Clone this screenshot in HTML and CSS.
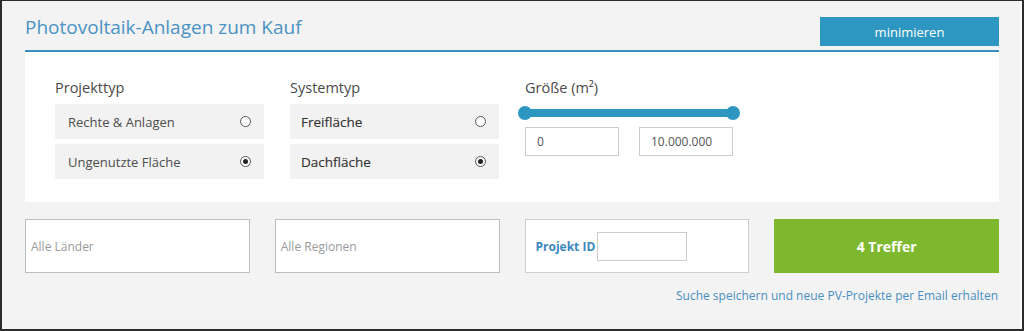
FILE: index.html
```html
<!DOCTYPE html>
<html lang="de">
<head>
  <meta charset="UTF-8" />
  <title>Photovoltaik-Anlagen zum Kauf</title>
  <link rel="stylesheet" href="styles.css">
</head>
<body>

<div class="frame">

  <!-- Header -->
  <div class="header">
    <h1>Photovoltaik-Anlagen zum Kauf</h1>
    <button class="min-btn">minimieren</button>
  </div>

  <!-- Filter panel -->
  <div class="panel">
    <div class="col">
      <div class="label">Projekttyp</div>
      <div class="option">Rechte &amp; Anlagen <span class="radio"></span></div>
      <div class="option">Ungenutzte Fläche <span class="radio checked"></span></div>
    </div>
    <div class="col">
      <div class="label">Systemtyp</div>
      <div class="option strong">Freifläche <span class="radio"></span></div>
      <div class="option strong">Dachfläche <span class="radio checked"></span></div>
    </div>
    <div class="col size">
      <div class="label">Größe (m²)</div>
      <div class="slider">
        <span class="track"></span>
        <span class="knob"></span>
        <span class="knob"></span>
      </div>
      <div class="range-inputs">
        <div class="num">0</div>
        <div class="num">10.000.000</div>
      </div>
    </div>
  </div>

  <!-- Bottom row -->
  <div class="bottom">
    <div class="select">Alle Länder</div>
    <div class="select">Alle Regionen</div>
    <div class="id-box">
      <span class="id-label">Projekt ID</span>
      <span class="id-input"></span>
    </div>
    <button class="hits">4 Treffer</button>
  </div>

  <div class="save-link"><a href="#">Suche speichern und neue PV-Projekte per Email erhalten</a></div>

</div>

</body>
</html>
```

FILE: styles.css
```css
* {
  margin: 0;
  padding: 0;
  box-sizing: border-box;
}

body {
  font-family: 'Open Sans', 'Liberation Sans', sans-serif;
  background: #f3f3f3;
  color: #444;
}

.frame {
  height: 331px;
  border: 2px solid #2b2b2b;
  border-top-width: 1px;
  background: #f3f3f3;
  padding: 0 23px;
  box-shadow: inset -2px 0 0 #fbfbfb;
}

/* Header */
.header {
  display: flex;
  justify-content: space-between;
  align-items: flex-start;
  padding-top: 12px;
  padding-bottom: 4px;
  border-bottom: 2px solid #3a8fbf;
}

.header h1 {
  font-size: 19px;
  font-weight: normal;
  line-height: 28px;
  color: #4a92c4;
}

.min-btn {
  margin-top: 4px;
  width: 179px;
  height: 29px;
  border: none;
  background: #2e97c1;
  color: #fff;
  font-family: inherit;
  font-size: 13px;
}

/* Panel */
.panel {
  background: #fff;
  height: 150px;
  padding: 26px 30px 0 30px;
  display: flex;
  gap: 26px;
}

.col {
  width: 209px;
  display: flex;
  flex-direction: column;
  gap: 5px;
}

.label {
  font-size: 14.5px;
  line-height: 20px;
  color: #4a4a4a;
  margin-bottom: 1px;
}

.option {
  height: 35px;
  background: #f2f2f2;
  display: flex;
  align-items: center;
  justify-content: space-between;
  padding: 0 13px 0 13px;
  font-size: 13px;
  color: #4d4d4d;
}

.option.strong {
  color: #333;
  -webkit-text-stroke: 0.15px #333;
  padding-left: 11px;
  font-size: 13.5px;
}

.radio {
  width: 11px;
  height: 11px;
  border: 1px solid #555;
  border-radius: 50%;
  background: #fff;
  position: relative;
  -webkit-text-stroke: 0;
}

.radio.checked::after {
  content: '';
  position: absolute;
  left: 2px;
  top: 2px;
  width: 5px;
  height: 5px;
  border-radius: 50%;
  background: #222;
}

/* Size slider */
.col.size {
  gap: 0;
  width: 210px;
}

.slider {
  margin-top: 7px;
  height: 14px;
  display: flex;
  justify-content: space-between;
  align-items: center;
  position: relative;
  margin-left: -7px;
  margin-right: -5px;
}

.track {
  position: absolute;
  left: 7px;
  right: 7px;
  top: 3px;
  height: 8px;
  background: #2e97c1;
}

.knob {
  width: 14px;
  height: 14px;
  border-radius: 50%;
  background: #2e97c1;
  position: relative;
}

.range-inputs {
  margin-top: 7px;
  display: flex;
  justify-content: space-between;
  padding-right: 2px;
}

.num {
  width: 94px;
  height: 29px;
  border: 1px solid #ccc;
  font-size: 12px;
  color: #555;
  line-height: 27px;
  padding-left: 11px;
}

/* Bottom row */
.bottom {
  margin-top: 17px;
  display: grid;
  grid-template-columns: repeat(4, 1fr);
  gap: 25px;
  height: 53px;
}

.select {
  background: #fff;
  border: 1px solid #bdbdbd;
  display: flex;
  align-items: center;
  padding-left: 5px;
  font-size: 12px;
  color: #9a9a9a;
}

.id-box {
  background: #fff;
  border: 1px solid #cfcfcf;
  display: flex;
  align-items: center;
  gap: 2px;
  padding-left: 10px;
}

.id-label {
  font-size: 12px;
  font-weight: bold;
  color: #3b87c0;
}

.id-input {
  width: 90px;
  height: 29px;
  border: 1px solid #ccc;
}

.hits {
  height: 54px;
  border: none;
  background: #7db82f;
  color: #fff;
  font-family: inherit;
  font-size: 14px;
  font-weight: bold;
}

.save-link {
  margin-top: 16px;
  text-align: right;
  font-size: 12px;
  line-height: 16px;
  padding-right: 1px;
}

.save-link a {
  color: #4a8fc3;
  text-decoration: none;
}
```
